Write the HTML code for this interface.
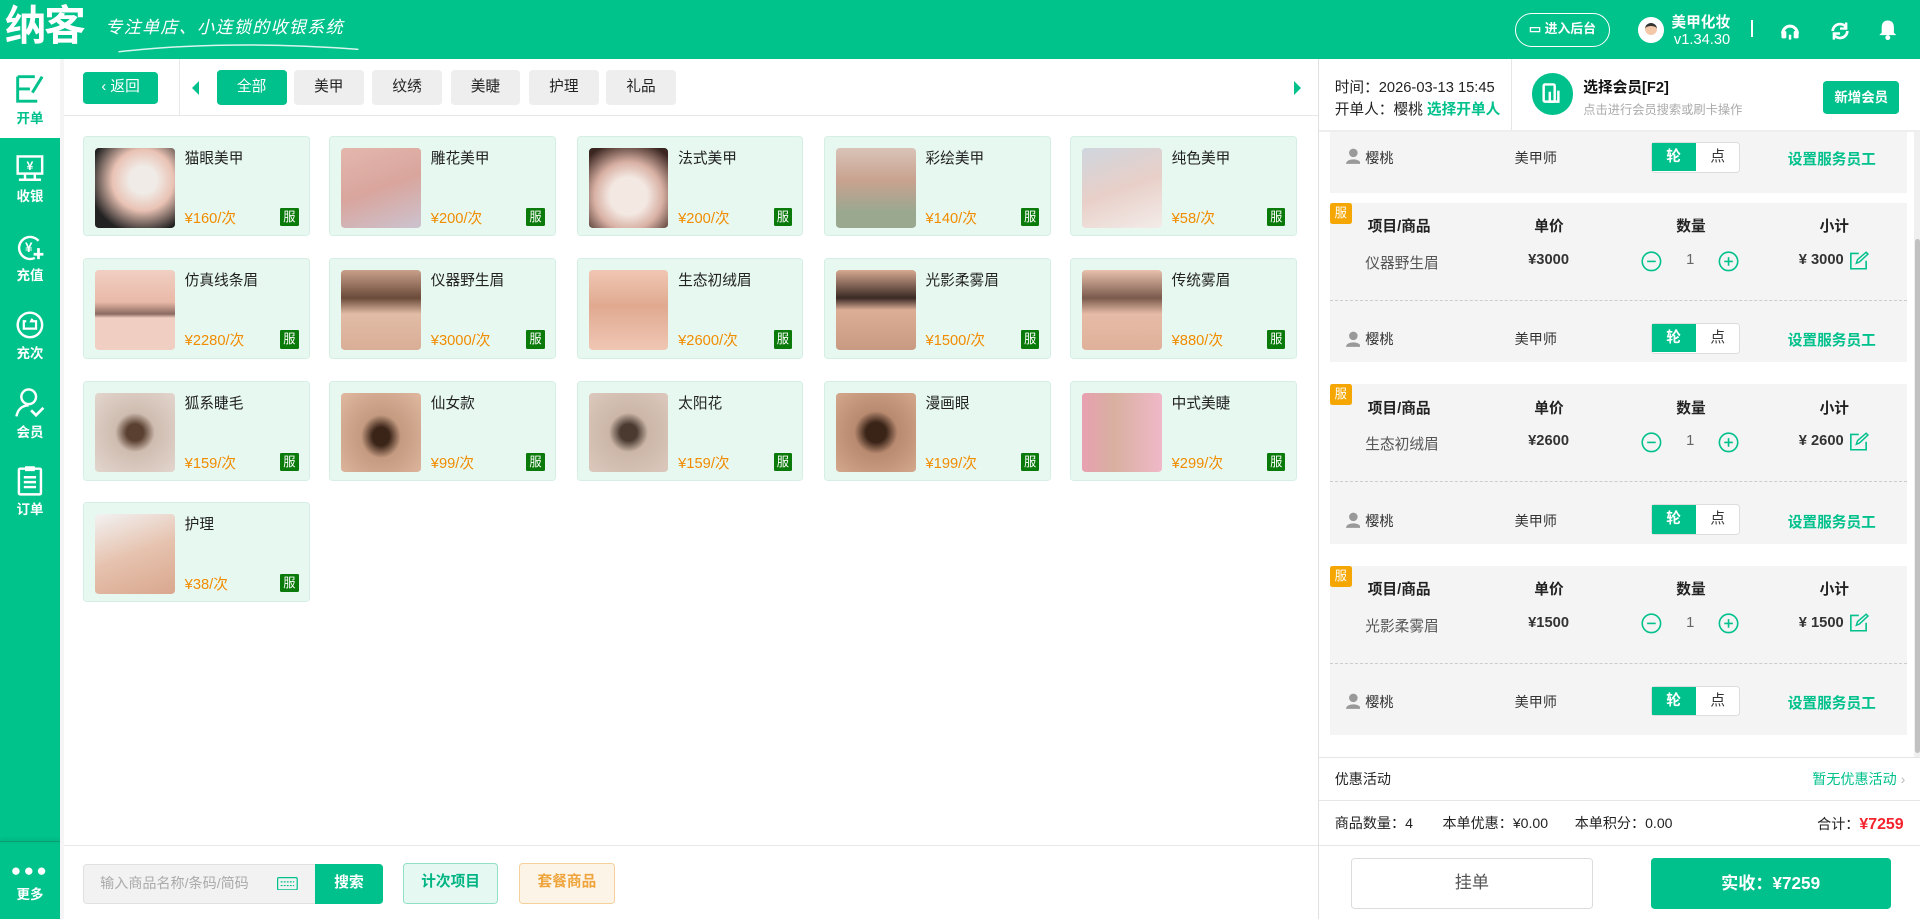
<!DOCTYPE html>
<html><head><meta charset="utf-8">
<style>
*{box-sizing:border-box;margin:0;padding:0}
html,body{width:1920px;height:919px;overflow:hidden;background:#fff}
body{font-family:"Liberation Sans","Noto Sans CJK SC",sans-serif;color:#333}
#w{zoom:1.22449;width:1568px;height:751px;position:relative;overflow:hidden}
.a{position:absolute}
.g{color:#00c18c}
#hdr{left:0;top:0;width:1568px;height:48px;background:#00c28b}
#side{left:0;top:48px;width:49px;height:703px;background:#00c28b}
.si{position:absolute;left:0;width:49px;text-align:center;color:#fff;font-size:11px;font-weight:bold}
.si svg{display:block;margin:0 auto 1px}
.tab{position:absolute;top:57px;height:29px;width:57px;border-radius:3px;background:#eee;font-size:12px;text-align:center;line-height:29px;color:#222}
.card{position:absolute;width:185px;height:82px;background:#e7f8f1;border:1px solid #d6efe5;border-radius:3px}
.card .im{position:absolute;left:9px;top:9px;width:65px;height:65px;border-radius:3px}
.card .n{position:absolute;left:82px;top:8px;font-size:12px;color:#222}
.card .p{position:absolute;left:82px;top:57px;font-size:12px;color:#f08c00}
.card .b{position:absolute;left:160px;top:58px;width:15px;height:15px;background:#0a7a0a;color:#fff;font-size:10px;text-align:center;line-height:15px;border-radius:1px}
.blk{position:absolute;left:1086px;width:471px;background:#f4f4f4}
.st{font-size:11.5px;color:#333}
.tg{position:absolute;left:262px;width:73px;height:25px;border:1px solid #ddd;border-radius:3px;background:#fff;font-size:12px}
.tg span{position:absolute;top:0;height:23px;line-height:23px;width:36px;text-align:center}
.ob{position:absolute;left:0;width:18px;height:17px;background:#f5a600;color:#fff;font-size:10px;text-align:center;line-height:17px;border-radius:2px}
</style></head><body><div id="w">
<div id="hdr" class="a">
 <div class="a" style="left:4px;top:2px;font-size:34px;line-height:40px;font-weight:bold;color:#fff;letter-spacing:-2px">纳客</div>
 <div class="a" style="left:86px;top:11px;font-size:14px;color:#fff;font-style:italic;letter-spacing:1px">专注单店、小连锁的收银系统</div>
 <svg class="a" style="left:95px;top:34px" width="200" height="10"><path d="M2 8 Q90 -2 198 6" stroke="#fff" fill="none" stroke-width="1.2" opacity=".85"/></svg>
 <div class="a" style="left:1237px;top:11px;width:78px;height:27px;border:1px solid #fff;border-radius:14px;color:#fff;font-size:10.5px;text-align:center;line-height:25px;font-weight:bold">▭ 进入后台</div>
 <div class="a" style="left:1338px;top:14px;width:21px;height:21px;border-radius:50%;background:#fff;overflow:hidden"><div style="margin:5px auto 0;width:10px;height:10px;border-radius:50%;background:#f3c8a8;border-top:3px solid #333"></div></div>
 <div class="a" style="left:1365px;top:9px;color:#fff;font-size:12px;font-weight:bold">美甲化妆</div>
 <div class="a" style="left:1367px;top:26px;color:#fff;font-size:12px">v1.34.30</div>
 <div class="a" style="left:1430px;top:16px;width:2px;height:14px;background:#fff"></div>
 <svg class="a" style="left:1453px;top:16px" width="18" height="18"><path d="M3 11a6 6 0 0 1 12 0" stroke="#fff" stroke-width="2.5" fill="none"/><rect x="2" y="9" width="4" height="6" rx="1" fill="#fff"/><rect x="12" y="9" width="4" height="6" rx="1" fill="#fff"/><path d="M9 12v4" stroke="#fff" stroke-width="2"/></svg>
 <svg class="a" style="left:1494px;top:16px" width="18" height="18"><path d="M3 9a6 6 0 0 1 11-3M15 9a6 6 0 0 1-11 3" stroke="#fff" stroke-width="2.2" fill="none"/><path d="M14 2v5h-5M4 16v-5h5" stroke="#fff" stroke-width="2" fill="none"/></svg>
 <svg class="a" style="left:1534px;top:15px" width="16" height="19"><path d="M8 2c-4 0-5 3-5 6v4l-2 2h14l-2-2V8c0-3-1-6-5-6z" fill="#fff"/><circle cx="8" cy="16" r="2" fill="#fff"/></svg>
</div>
<div id="side" class="a">
 <div class="a" style="left:0;top:0;width:49px;height:65px;background:#fff"></div>
 <div class="si" style="top:12px;color:#00c18c"><svg width="26" height="26"><path d="M3 3h14M3 3v20h16M3 13h10M8 23" stroke="#00c18c" stroke-width="2.4" fill="none"/><path d="M15 16l8-13" stroke="#00c18c" stroke-width="2.4"/></svg>开单</div>
 <div class="si" style="top:78px"><svg width="26" height="24"><rect x="3" y="2" width="20" height="14" stroke="#fff" stroke-width="2" fill="none"/><text x="13" y="13" font-size="10" fill="#fff" text-anchor="middle" font-weight="bold">¥</text><path d="M9 16v4M17 16v4M4 21h18" stroke="#fff" stroke-width="2"/></svg>收银</div>
 <div class="si" style="top:141px"><svg width="26" height="26"><path d="M20 8a9 9 0 1 0-3 14" stroke="#fff" stroke-width="2" fill="none"/><text x="12" y="17" font-size="11" fill="#fff" text-anchor="middle" font-weight="bold">¥</text><path d="M20 14v9M16 19h8" stroke="#fff" stroke-width="2.2"/></svg>充值</div>
 <div class="si" style="top:204px"><svg width="26" height="26"><circle cx="13" cy="13" r="10" stroke="#fff" stroke-width="2" fill="none"/><path d="M10 10H8v6h10v-6h-4l1-2" stroke="#fff" stroke-width="1.8" fill="none"/></svg>充次</div>
 <div class="si" style="top:268px"><svg width="26" height="27"><circle cx="12" cy="8" r="6" stroke="#fff" stroke-width="2" fill="none"/><path d="M2 24c1-6 5-9 10-9" stroke="#fff" stroke-width="2" fill="none"/><path d="M14 19l4 4 6-6" stroke="#fff" stroke-width="2.2" fill="none"/></svg>会员</div>
 <div class="si" style="top:332px"><svg width="26" height="26"><rect x="4" y="3" width="18" height="21" rx="1" stroke="#fff" stroke-width="2" fill="none"/><rect x="9" y="1" width="8" height="4" fill="#fff"/><path d="M8 10h10M8 14h10M8 18h10" stroke="#fff" stroke-width="2"/></svg>订单</div>
 <div class="a" style="left:0;top:639px;width:49px;height:1px;background:#0a9e70;box-shadow:0 -1px 3px rgba(0,0,0,.2)"></div>
 <div class="si" style="top:656px;font-size:11px"><div style="font-size:14px;letter-spacing:2px;line-height:14px">●●●</div><div style="margin-top:3px">更多</div></div>
</div>
<div class="a" style="left:49px;top:48px;width:3px;height:703px;background:#eee;opacity:.6"></div>
<div class="a" style="left:52px;top:94px;width:1024px;height:1px;background:#e8e8e8"></div>
<div class="a" style="left:68px;top:59px;width:61px;height:26px;background:#00c18c;border-radius:3px;color:#fff;font-size:12px;text-align:center;line-height:26px">‹ 返回</div>
<div class="a" style="left:146px;top:48px;width:1px;height:46px;background:#e8e8e8"></div>
<div class="a" style="left:157px;top:66px;width:0;height:0;border-top:6px solid transparent;border-bottom:6px solid transparent;border-right:6px solid #00c18c"></div>
<div class="tab" style="left:177px;background:#00c18c;color:#fff">全部</div>
<div class="tab" style="left:240px">美甲</div>
<div class="tab" style="left:304px">纹绣</div>
<div class="tab" style="left:368px">美睫</div>
<div class="tab" style="left:432px">护理</div>
<div class="tab" style="left:495px">礼品</div>
<div class="a" style="left:1057px;top:66px;width:0;height:0;border-top:6px solid transparent;border-bottom:6px solid transparent;border-left:6px solid #00c18c"></div>
<div class="card" style="left:68px;top:111px"><div class="im" style="background:radial-gradient(circle at 60% 40%,#f0ebe6 20%,#e9c2b4 45%,#222 80%)"></div><div class="n">猫眼美甲</div><div class="p">¥160/次</div><div class="b">服</div></div>
<div class="card" style="left:269px;top:111px"><div class="im" style="background:linear-gradient(160deg,#e3b7ad,#d9a59d 50%,#ccc3cf)"></div><div class="n">雕花美甲</div><div class="p">¥200/次</div><div class="b">服</div></div>
<div class="card" style="left:471px;top:111px"><div class="im" style="background:radial-gradient(circle at 50% 60%,#f3e8e2 30%,#d8b0a3 55%,#3a2520 90%)"></div><div class="n">法式美甲</div><div class="p">¥200/次</div><div class="b">服</div></div>
<div class="card" style="left:673px;top:111px"><div class="im" style="background:linear-gradient(180deg,#d9c4b8,#c9a28f 40%,#9aa890 80%)"></div><div class="n">彩绘美甲</div><div class="p">¥140/次</div><div class="b">服</div></div>
<div class="card" style="left:874px;top:111px"><div class="im" style="background:linear-gradient(160deg,#cfd6de,#e8cfc8 50%,#f3ece9)"></div><div class="n">纯色美甲</div><div class="p">¥58/次</div><div class="b">服</div></div>
<div class="card" style="left:68px;top:211px"><div class="im" style="background:linear-gradient(180deg,#f0cfc2,#e9b9a8 40%,#8a6a60 55%,#f0cfc2 60%)"></div><div class="n">仿真线条眉</div><div class="p">¥2280/次</div><div class="b">服</div></div>
<div class="card" style="left:269px;top:211px"><div class="im" style="background:linear-gradient(180deg,#c9a08a,#6a4a3a 35%,#e2bca6 55%,#d9ae96)"></div><div class="n">仪器野生眉</div><div class="p">¥3000/次</div><div class="b">服</div></div>
<div class="card" style="left:471px;top:211px"><div class="im" style="background:linear-gradient(180deg,#f0c7b4,#e0a990 45%,#f0c7b4)"></div><div class="n">生态初绒眉</div><div class="p">¥2600/次</div><div class="b">服</div></div>
<div class="card" style="left:673px;top:211px"><div class="im" style="background:linear-gradient(180deg,#d7a991,#3a2a24 35%,#dcae96 50%,#c99a82)"></div><div class="n">光影柔雾眉</div><div class="p">¥1500/次</div><div class="b">服</div></div>
<div class="card" style="left:874px;top:211px"><div class="im" style="background:linear-gradient(180deg,#e9c1ad,#7a5a4c 35%,#e6bba6 55%,#dfb19b)"></div><div class="n">传统雾眉</div><div class="p">¥880/次</div><div class="b">服</div></div>
<div class="card" style="left:68px;top:311px"><div class="im" style="background:radial-gradient(ellipse at 50% 50%,#5a4030 15%,#cfbcb0 35%,#e3d6ce)"></div><div class="n">狐系睫毛</div><div class="p">¥159/次</div><div class="b">服</div></div>
<div class="card" style="left:269px;top:311px"><div class="im" style="background:radial-gradient(ellipse at 50% 55%,#3a2418 15%,#c49a80 35%,#e0b9a0)"></div><div class="n">仙女款</div><div class="p">¥99/次</div><div class="b">服</div></div>
<div class="card" style="left:471px;top:311px"><div class="im" style="background:radial-gradient(ellipse at 50% 50%,#4a3a30 15%,#cbb6a8 35%,#dcc9bd)"></div><div class="n">太阳花</div><div class="p">¥159/次</div><div class="b">服</div></div>
<div class="card" style="left:673px;top:311px"><div class="im" style="background:radial-gradient(ellipse at 50% 50%,#3a2418 18%,#b88a70 38%,#d4a88c)"></div><div class="n">漫画眼</div><div class="p">¥199/次</div><div class="b">服</div></div>
<div class="card" style="left:874px;top:311px"><div class="im" style="background:linear-gradient(90deg,#e8a0b0,#d8b0a0 40%,#f0b8c8)"></div><div class="n">中式美睫</div><div class="p">¥299/次</div><div class="b">服</div></div>
<div class="card" style="left:68px;top:410px"><div class="im" style="background:linear-gradient(160deg,#f2f2f2,#e6c2ae 50%,#d9a78e)"></div><div class="n">护理</div><div class="p">¥38/次</div><div class="b">服</div></div>
<div class="a" style="left:52px;top:690px;width:1024px;height:1px;background:#e8e8e8"></div>
<div class="a" style="left:68px;top:706px;width:190px;height:32px;background:#f2f2f2;border:1px solid #e0e0e0;border-radius:3px 0 0 3px;font-size:11.5px;color:#aaa;line-height:30px;padding-left:13px">输入商品名称/条码/简码</div>
<svg class="a" style="left:226px;top:716px" width="17" height="11"><rect x=".5" y=".5" width="16" height="10" rx="1" stroke="#00c18c" fill="none"/><path d="M3 4h11M3 7h11" stroke="#00c18c" stroke-dasharray="1.5 1"/></svg>
<div class="a" style="left:257px;top:706px;width:56px;height:32px;background:#00c18c;border-radius:0 3px 3px 0;color:#fff;font-size:12px;font-weight:bold;text-align:center;line-height:32px">搜索</div>
<div class="a" style="left:329px;top:705px;width:78px;height:33px;background:#e5f8f2;border:1px solid #8fe0c6;border-radius:3px;color:#00b583;font-size:12px;font-weight:bold;text-align:center;line-height:31px">计次项目</div>
<div class="a" style="left:424px;top:705px;width:78px;height:33px;background:#fdf4e8;border:1px solid #f5d09a;border-radius:3px;color:#eea43a;font-size:12px;font-weight:bold;text-align:center;line-height:31px">套餐商品</div>
<div class="a" style="left:1076px;top:48px;width:1px;height:703px;background:#e0e0e0"></div>
<div class="a" style="left:1090px;top:62px;font-size:12px;color:#222">时间：2026-03-13 15:45</div>
<div class="a" style="left:1090px;top:80px;font-size:12px;color:#222">开单人：樱桃 <span class="g" style="font-weight:bold">选择开单人</span></div>
<div class="a" style="left:1234px;top:48px;width:1px;height:59px;background:#e6e6e6"></div>
<div class="a" style="left:1251px;top:60px;width:34px;height:34px;border-radius:50%;background:#00c18c"></div>
<svg class="a" style="left:1258px;top:67px" width="20" height="20"><rect x="3" y="2" width="9" height="14" rx="1" stroke="#fff" stroke-width="2" fill="none"/><path d="M8 8v8h7V7" stroke="#fff" stroke-width="2" fill="none"/></svg>
<div class="a" style="left:1293px;top:62px;font-size:12px;font-weight:bold;color:#111">选择会员[F2]</div>
<div class="a" style="left:1293px;top:82px;font-size:10px;color:#aaa">点击进行会员搜索或刷卡操作</div>
<div class="a" style="left:1489px;top:66px;width:62px;height:27px;background:#00c18c;border-radius:3px;color:#fff;font-size:11px;font-weight:bold;text-align:center;line-height:27px">新增会员</div>
<div class="a" style="left:1077px;top:106px;width:491px;height:2px;background:#eee"></div>
<div class="a" style="left:1563px;top:108px;width:5px;height:510px;background:#f0f0f0"></div>
<div class="a" style="left:1564px;top:195px;width:4px;height:420px;background:#c1c1c1;border-radius:2px"></div>
<div class="blk" style="top:108px;height:50px">
 <svg class="a" style="left:13px;top:13px" width="12" height="13"><circle cx="6" cy="4" r="3.5" fill="#999"/><path d="M0 13c0-5 12-5 12 0z" fill="#999"/></svg>
 <div class="a st" style="left:29px;top:13px">樱桃</div><div class="a st" style="left:151px;top:13px">美甲师</div>
 <div class="tg" style="top:8px"><span style="left:0;background:#00c18c;color:#fff;font-weight:bold">轮</span><span style="left:36px">点</span></div>
 <div class="a" style="left:374px;top:13px;font-size:12px;font-weight:bold;color:#00c18c">设置服务员工</div>
</div>
<div id="groups"></div>
<script>
var items=[["仪器野生眉","3000",166],["生态初绒眉","2600",314],["光影柔雾眉","1500",462]];
var h="";
items.forEach(function(it,i){var t=it[2];
h+='<div class="blk" style="top:'+t+'px;height:80px;border-bottom:1px dashed #ccc"><div class="ob" style="top:0">服</div>'+
'<div class="a" style="left:31px;top:10px;font-size:12px;font-weight:bold;color:#222">项目/商品</div>'+
'<div class="a" style="left:167px;top:10px;font-size:12px;font-weight:bold;color:#222">单价</div>'+
'<div class="a" style="left:283px;top:10px;font-size:12px;font-weight:bold;color:#222">数量</div>'+
'<div class="a" style="left:400px;top:10px;font-size:12px;font-weight:bold;color:#222">小计</div>'+
'<div class="a" style="left:29px;top:40px;font-size:12px;color:#555">'+it[0]+'</div>'+
'<div class="a" style="left:162px;top:40px;font-size:12px;font-weight:bold;color:#333">¥'+it[1]+'</div>'+
'<svg class="a" style="left:254px;top:39px" width="80" height="17"><circle cx="8.5" cy="8.5" r="7.5" stroke="#00c18c" stroke-width="1.3" fill="none"/><path d="M5 8.5h7" stroke="#00c18c" stroke-width="1.3"/><circle cx="71.5" cy="8.5" r="7.5" stroke="#00c18c" stroke-width="1.3" fill="none"/><path d="M68 8.5h7M71.5 5v7" stroke="#00c18c" stroke-width="1.3"/></svg>'+
'<div class="a" style="left:291px;top:40px;font-size:12px;color:#666">1</div>'+
'<div class="a" style="left:383px;top:40px;font-size:12px;font-weight:bold;color:#333">¥ '+it[1]+'</div>'+
'<svg class="a" style="left:424px;top:39px" width="16" height="16"><path d="M8 2H1.5v12.5H14V8" stroke="#00c18c" stroke-width="1.3" fill="none"/><path d="M6 10l1-3 7-6 1.5 1.5-7 6.5z" stroke="#00c18c" stroke-width="1.2" fill="none"/></svg></div>';
var s=t+80,hh=(i==2?58:50);
h+='<div class="blk" style="top:'+s+'px;height:'+hh+'px"><svg class="a" style="left:13px;top:24px" width="12" height="13"><circle cx="6" cy="4" r="3.5" fill="#999"/><path d="M0 13c0-5 12-5 12 0z" fill="#999"/></svg>'+
'<div class="a st" style="left:29px;top:23px">樱桃</div><div class="a st" style="left:151px;top:23px">美甲师</div>'+
'<div class="tg" style="top:18px"><span style="left:0;background:#00c18c;color:#fff;font-weight:bold">轮</span><span style="left:36px">点</span></div>'+
'<div class="a" style="left:374px;top:23px;font-size:12px;font-weight:bold;color:#00c18c">设置服务员工</div></div>';
});
document.getElementById("groups").innerHTML=h;
</script>
<div class="a" style="left:1077px;top:618px;width:491px;height:1px;background:#e6e6e6"></div>
<div class="a" style="left:1090px;top:628px;font-size:11.5px;color:#222">优惠活动</div>
<div class="a" style="left:1480px;top:628px;font-size:11.5px;color:#00c18c">暂无优惠活动 <span style="color:#bbb">›</span></div>
<div class="a" style="left:1077px;top:653px;width:491px;height:1px;background:#e6e6e6"></div>
<div class="a" style="left:1090px;top:664px;font-size:11.5px;color:#222">商品数量：4</div>
<div class="a" style="left:1178px;top:664px;font-size:11.5px;color:#222">本单优惠：¥0.00</div>
<div class="a" style="left:1286px;top:664px;font-size:11.5px;color:#222">本单积分：0.00</div>
<div class="a" style="left:1484px;top:665px;font-size:11.5px;color:#222">合计：<span style="color:#f5222d;font-weight:bold;font-size:13px">¥7259</span></div>
<div class="a" style="left:1077px;top:690px;width:491px;height:1px;background:#e6e6e6"></div>
<div class="a" style="left:1103px;top:701px;width:198px;height:41px;border:1px solid #dcdcdc;border-radius:3px;text-align:center;line-height:39px;font-size:14px;color:#555">挂单</div>
<div class="a" style="left:1348px;top:701px;width:196px;height:41px;background:#00c18c;border-radius:3px;text-align:center;line-height:41px;font-size:14px;color:#fff;font-weight:bold">实收：¥7259</div>
</div></body></html>
